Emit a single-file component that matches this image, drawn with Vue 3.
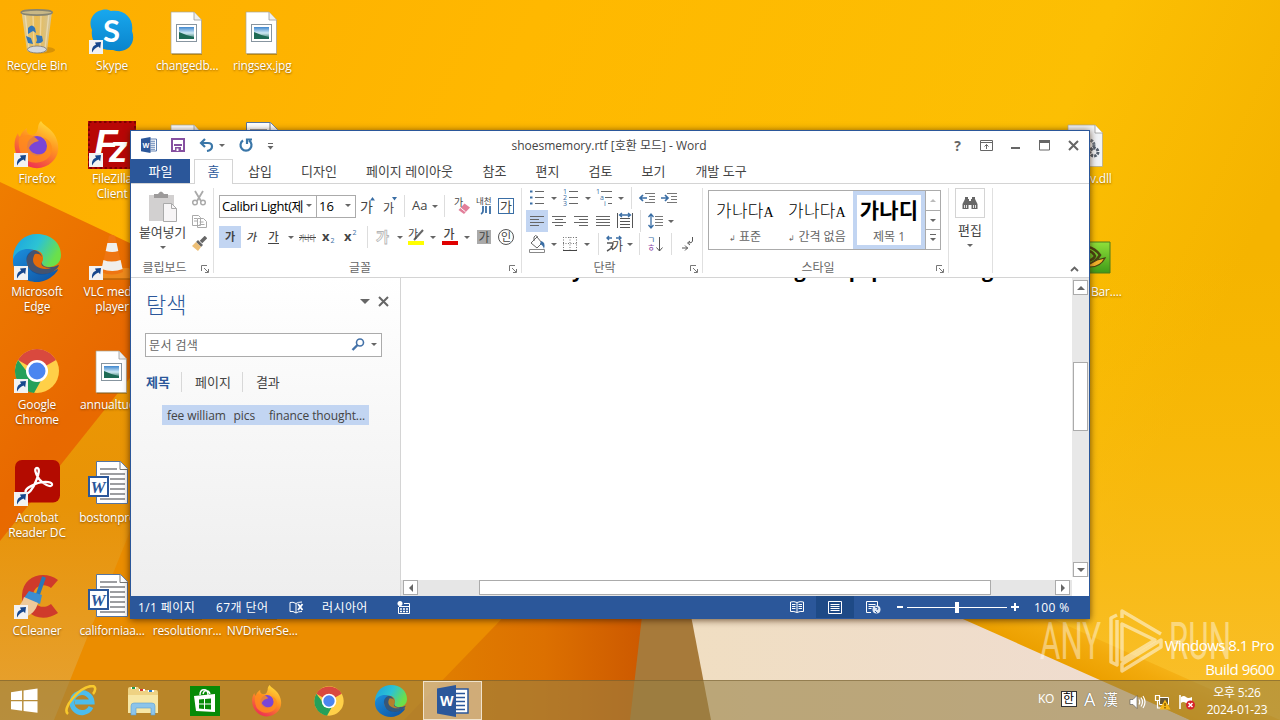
<template>
  <div class="screen">
    <!-- 图标定义 -->
    <svg class="defs" width="0" height="0">
      <defs>
        <linearGradient id="gEdge" x1="0" y1="0" x2="1" y2=".4">
          <stop offset="0" stop-color="#1ba0e0" /><stop offset=".55" stop-color="#2cc3d4" /><stop offset="1" stop-color="#6be04a" />
        </linearGradient>
        <linearGradient id="gEdge2" x1="0" y1="0" x2="1" y2="1">
          <stop offset="0" stop-color="#1b8fdd" /><stop offset="1" stop-color="#0f4f9e" />
        </linearGradient>
        <linearGradient id="gFox" x1=".8" y1="0" x2=".3" y2="1">
          <stop offset="0" stop-color="#ffe23c" /><stop offset=".45" stop-color="#ff9420" /><stop offset="1" stop-color="#ee2a56" />
        </linearGradient>
        <linearGradient id="gSkype" x1="0" y1="0" x2="0" y2="1">
          <stop offset="0" stop-color="#18a8ee" /><stop offset="1" stop-color="#0a84cc" />
        </linearGradient>
        <linearGradient id="gBin" x1="0" y1="0" x2="1" y2="0">
          <stop offset="0" stop-color="#d8cda8" /><stop offset=".5" stop-color="#e8bd5a" /><stop offset="1" stop-color="#cdc6ac" />
        </linearGradient>
        <linearGradient id="gPic" x1="0" y1="0" x2="0" y2="1">
          <stop offset="0" stop-color="#3f87cf" /><stop offset=".5" stop-color="#cfe9f4" /><stop offset="1" stop-color="#1d6a55" />
        </linearGradient>
        <linearGradient id="gNv" x1="0" y1="0" x2="0" y2="1">
          <stop offset="0" stop-color="#8fe03a" /><stop offset="1" stop-color="#3f9a18" />
        </linearGradient>
      </defs>
      <symbol id="arrowBadge" viewBox="0 0 14 14">
        <rect width="14" height="14" fill="#f2f2f2" />
        <path d="M3.200 12.400C2.400 8.600 4 5.600 7 4.800L6 2.400l6-.4-.8 6.200-1.700-1.600C6.600 7.600 4.800 9.400 3.200 12.400z" fill="#17478c" />
      </symbol>
      <symbol id="bin" viewBox="0 0 48 48">
        <ellipse cx="28" cy="42" rx="14" ry="3.500" fill="#a06a10" opacity=".4" />
        <path d="M8.500 3.500L14 43c5 3 16 3 20 0l5-39.500z" fill="url(#gBin)" opacity=".9" />
        <path d="M12 5l4 36M20 7l1 31M28 7l-1 31M36 5l-4 36" stroke="#fff" stroke-width="1.400" opacity=".35" />
        <ellipse cx="24" cy="41.500" rx="9.500" ry="3.500" fill="#d5d9dc" stroke="#777" stroke-width=".8" />
        <path d="M15 20q4-5 7 0l1 5-3-2-5 3zM23 27l6 1 1 5q-2 3-7 2l1-3zM13 28l5 2 2 6-5-1z" fill="#3276b8" />
        <ellipse cx="23.700" cy="4.500" rx="15.500" ry="2.600" fill="#c9b886" stroke="#888571" stroke-width="1.600" />
      </symbol>
      <symbol id="skype" viewBox="0 0 48 48">
        <path d="M14 2c4-1 7 0 9 1 14-2 23 8 21 20 5 13-6 24-19 19C11 43 2 34 4 22 0 14 4 4 14 2z" fill="url(#gSkype)" />
      </symbol>
      <symbol id="pic" viewBox="0 0 48 48">
        <path d="M9 5h22l8 8v34H9z" fill="#7a5b17" opacity=".5" />
        <path d="M8 4h23l7.500 8v33.500H8z" fill="#fff" stroke="#a9a696" stroke-width=".7" />
        <path d="M31 4v8h7.500" fill="#eee" stroke="#999" stroke-width=".8" />
        <rect x="13.500" y="16.500" width="20" height="17" fill="#fff" stroke="#8795a0" />
        <rect x="16" y="19" width="15" height="12" fill="url(#gPic)" />
        <path d="M16 31v-7q6 3 15 5v2z" fill="#1d6a55" />
      </symbol>
      <symbol id="dll" viewBox="0 0 48 48">
        <path d="M4 4h27l7.500 8v33.500H4z" fill="#f1f3f6" stroke="#a9a696" stroke-width=".7" />
        <path d="M31 4v8h7.500" fill="#fff" stroke="#999" stroke-width=".8" />
        <circle cx="25" cy="24" r="5" fill="none" stroke="#6c7783" stroke-width="3" stroke-dasharray="2.500 1" />
        <circle cx="30" cy="31" r="4" fill="none" stroke="#56616e" stroke-width="3" stroke-dasharray="2.500 1" />
      </symbol>
      <symbol id="nv" viewBox="0 0 48 48">
        <path d="M6 8h40v31H6z" fill="url(#gNv)" stroke="#4b7d1c" />
        <path d="M24 13c6 1 9 4 12 8-3 5-6 8-12 10M25 17c4 1 5 3 6 5-1 3-3 4-7 5" fill="none" stroke="#4a4212" stroke-width="2.500" />
        <path d="M41 24c-3 6-8 9-15 9l-2-2 9-5z" fill="#f5b32c" stroke="#4a4212" stroke-width="1.200" />
      </symbol>
      <symbol id="firefox" viewBox="0 0 48 48">
        <path d="M28 0c2 4 9 7 13 13 6 9 6 21-2 28-8 8-21 8-29 1C1 34-1 21 5 12c0 2 1 3 2 4 1-4 4-7 7-9-1 4 1 6 4 7 5 0 6-3 7-7 0-3 1-5 3-7z" fill="url(#gFox)" />
        <circle cx="24" cy="25" r="10" fill="#7a45d6" />
        <path d="M6 17c8-5 14-4 20 3-5 1-8 3-10 7 2 5 7 7 12 6 7-1 9-10 2-17 9 3 12 13 6 20-7 8-22 8-28-3-2-5-3-11-2-16z" fill="#ff8d1c" opacity=".8" />
      </symbol>
      <symbol id="filezilla" viewBox="0 0 48 48">
        <rect width="48" height="48" fill="#b80606" />
        <rect x="1" y="1" width="46" height="46" fill="none" stroke="#7b0000" stroke-width="2" stroke-dasharray="2.500 2.500" />
      </symbol>
      <symbol id="edge" viewBox="0 0 48 48">
        <path d="M0 22C2 8 12 0 24 0c14 0 24 9 24 21 0 8-6 12-12 12-5 0-8-2-7-5 3-6-1-12-8-12C12 15 3 18 0 26z" fill="url(#gEdge)" />
        <path d="M0 26c2-9 12-13 21-10-6 3-8 8-7 13 2 9 12 13 22 10 4-1 8-4 9-4 1 1-8 13-21 13C10 48-1 38 0 26z" fill="url(#gEdge2)" />
        <path d="M14 29c-2-6 1-11 7-13 5 1 9 5 8 11-1 4 3 7 9 6 4 0 7-2 8-2-3 10-28 16-32-2z" fill="#0c4894" opacity=".75" />
        <path d="M22 20c6-1 9 4 7 8-2 3 1 6 9 6-8 3-18-1-18-8 0-2 1-5 2-6z" fill="currentColor" />
      </symbol>
      <symbol id="vlc" viewBox="0 0 48 48">
        <path d="M7 34h34l5 11H2z" fill="#ee8a1c" />
        <path d="M2 45h44" stroke="#b86408" stroke-width="1.500" />
        <path d="M21 2q3-2 6 0l8 36q-11 5-22 0z" fill="#ee7512" />
        <path d="M19.400 9h9.200l1.700 8q-6 2-12.600 0zM15.400 26q8 3 17.200 0l2 9q-10 4-21 0z" fill="#f0efec" />
      </symbol>
      <symbol id="chrome" viewBox="0 0 48 48">
        <circle cx="24" cy="24" r="22" fill="#ffd048" />
        <path d="M24 24L5 13a22 22 0 0 1 38 0z" fill="#d9493e" />
        <path d="M5 13a22 22 0 0 0 16 33l9-16H18z" fill="#25a05a" />
        <circle cx="24" cy="24" r="11" fill="#fff" />
        <circle cx="24" cy="24" r="8.500" fill="#4b86f0" />
      </symbol>
      <symbol id="acrobat" viewBox="0 0 48 48">
        <rect x="2" y="0" width="45" height="42.500" rx="7" fill="#b30b00" />
        <path d="M13 33c-2-3 3-7 12-10 8-2 15-1 14 2s-9-1-13-6c-4-6-5-11-2-11s2 6-1 13c-3 8-8 14-10 12z" fill="none" stroke="#fff" stroke-width="2.300" />
      </symbol>
      <symbol id="ccleaner" viewBox="0 0 48 48">
        <path d="M45 7C32-3 10 2 9 22s20 29 36 18l-7-9c-8 6-18 2-18-8s11-14 18-8z" fill="#cf3a2b" />
        <path d="M31 4l-7 20" stroke="#2878b8" stroke-width="4" />
        <path d="M16 18l13 4-2 9-16-6z" fill="#3c8ed0" />
        <path d="M11 24l14 6c-2 8-8 13-14 14L1 36c5-2 8-6 10-12z" fill="#edc99a" />
      </symbol>
      <symbol id="wordDoc" viewBox="0 0 48 48">
        <path d="M8.500 1.500h24l7 7v35h-31z" fill="#fff" stroke="#56749f" />
        <path d="M32 1.500v8h8" fill="#fff" stroke="#777" />
        <path d="M12 9h17M12 14h25M22 19h15M22 24h15M22 29h15M22 34h15M12 39h25" stroke="#7d7f83" stroke-width="1.300" />
        <rect x="1" y="17" width="19" height="19" fill="#fff" stroke="#2b579a" stroke-width="2" />
      </symbol>
      <symbol id="word" viewBox="0 0 32 32">
        <path d="M17 4h14v24H17z" fill="#fff" stroke="#2b579a" stroke-width="1.500" />
        <path d="M19 8.500h9M19 12.500h9M19 16.500h9M19 20.500h9M19 24.500h9" stroke="#2b579a" stroke-width="1.500" />
        <path d="M0 3.500L19 0v32L0 28.500z" fill="#2b579a" />
      </symbol>
      <symbol id="ie" viewBox="0 0 32 32">
        <path d="M26 22a10 10 0 1 1 1-5H10" fill="none" stroke="#4cbdec" stroke-width="5" />
        <path d="M3 29C-4 24 14 2 27 1c5 0 3 6 1 8" fill="none" stroke="#f8c92c" stroke-width="2.600" />
      </symbol>
      <symbol id="explorer" viewBox="0 0 32 32">
        <path d="M1 4q0-2 2-2h8l2 3h16q2 0 2 2v20H1z" fill="#eed283" />
        <path d="M4 3h5M12 5h6M21 6h6" stroke="#fff" stroke-width="2" />
        <path d="M5 3h3" stroke="#219b4a" stroke-width="2" /><path d="M13 5h3" stroke="#d33a2c" stroke-width="2" /><path d="M22 6h3" stroke="#2b7bc0" stroke-width="2" />
        <path d="M1 10h30v18H1z" fill="#f7e7a6" />
        <path d="M4 30v-9q0-3 3-3h18q3 0 3 3v9h-4v-7H9v7z" fill="#8cc4ea" stroke="#5ba0d1" stroke-width=".6" />
      </symbol>
      <symbol id="store" viewBox="0 0 32 32">
        <rect x="1" y="1" width="30" height="30" fill="#078a07" />
        <path d="M11 10c0-7 8-7 8 0M14 9c1-5 6-4 7 0" fill="none" stroke="#fff" stroke-width="1.400" />
        <path d="M5 11l21-2v18L7 26z" fill="#fff" />
        <path d="M10 14.500l5-.5v4.500h-5zM16 14l6-.6v5.100h-6zM10 19.500h5V24l-5-.5zM16 19.500h6v5l-6-.4z" fill="#078a07" />
      </symbol>
      <symbol id="winLogo" viewBox="0 0 28 26">
        <path d="M0 4l11.500-1.800V12H0zM13 2L27.500 0v12H13zM0 13.300h11.500v9.900L0 21.600zM13 13.300h14.500v12L13 23.400z" fill="#fff" />
      </symbol>

      <!-- 功能区小图标 -->
      <symbol id="t-grow" viewBox="0 0 22 22"><path d="M14 5.500L16.500 2 19 5.500z" fill="#3a6ea5" /></symbol>
      <symbol id="t-shrink" viewBox="0 0 22 22"><path d="M14 2l2.500 3.500L19 2z" fill="#3a6ea5" /></symbol>
      <symbol id="t-clear" viewBox="0 0 22 22"><path d="M7.500 15l6-6.500 5.500 4-6 6.500z" fill="#e27f9a" /><path d="M9.500 12.800l5 4" stroke="#fff" /></symbol>
      <symbol id="t-ruby" viewBox="0 0 22 22"><path d="M10 11v5q0 2-2 3M13 11v7M17 11v8" fill="none" stroke="#3a6ea5" stroke-width="1.800" /></symbol>
      <symbol id="t-box" viewBox="0 0 22 22"><rect x="3.500" y="3.500" width="15" height="15" fill="none" stroke="#3a6ea5" /></symbol>
      <symbol id="t-under" viewBox="0 0 22 22"><path d="M5 17.500h11" stroke="#444" /></symbol>
      <symbol id="t-strike" viewBox="0 0 22 22"><path d="M3 11.500h17" stroke="#444" /></symbol>
      <symbol id="t-mark" viewBox="0 0 22 22"><path d="M9 14l9-10" stroke="#666" stroke-width="2" /><path d="M3 15h16v4H3z" fill="#ff0" /></symbol>
      <symbol id="t-color" viewBox="0 0 22 22"><path d="M3 15h16v4H3z" fill="#e00000" /></symbol>
      <symbol id="t-shade" viewBox="0 0 22 22"><rect x="4" y="4" width="14" height="14" fill="#aaa" /></symbol>
      <symbol id="t-circle" viewBox="0 0 22 22"><circle cx="11" cy="11" r="7.500" fill="none" stroke="#555" /></symbol>
      <symbol id="t-bullets" viewBox="0 0 22 22">
        <path d="M9 4.500h9M9 10.500h9M9 16.500h9" stroke="#666" /><path d="M4 3.500h2.500v2H4zM4 9.500h2.500v2H4zM4 15.500h2.500v2H4z" fill="#3a6ea5" />
      </symbol>
      <symbol id="t-numbers" viewBox="0 0 22 22"><path d="M9 4.500h9M9 10.500h9M9 16.500h9" stroke="#666" /></symbol>
      <symbol id="t-multi" viewBox="0 0 22 22"><path d="M8 4.500h11M12 10.500h7M15 16.500h4" stroke="#666" /></symbol>
      <symbol id="t-outdent" viewBox="0 0 22 22"><path d="M9 6.500h10M13 9.500h6M13 12.500h6M9 15.500h10" stroke="#777" /><path d="M11 11H4M7 8l-3 3 3 3" fill="none" stroke="#3a6ea5" stroke-width="1.700" /></symbol>
      <symbol id="t-indent" viewBox="0 0 22 22"><path d="M9 6.500h10M13 9.500h6M13 12.500h6M9 15.500h10" stroke="#777" /><path d="M3 11h7M7 8l3 3-3 3" fill="none" stroke="#3a6ea5" stroke-width="1.700" /></symbol>
      <symbol id="t-left" viewBox="0 0 22 22"><path d="M4 6.500h14M4 9.500h9M4 12.500h14M4 15.500h9" stroke="#666" /></symbol>
      <symbol id="t-center" viewBox="0 0 22 22"><path d="M4 6.500h14M7 9.500h8M4 12.500h14M7 15.500h8" stroke="#666" /></symbol>
      <symbol id="t-right" viewBox="0 0 22 22"><path d="M4 6.500h14M9 9.500h9M4 12.500h14M9 15.500h9" stroke="#666" /></symbol>
      <symbol id="t-justify" viewBox="0 0 22 22"><path d="M4 6.500h14M4 9.500h14M4 12.500h14M4 15.500h14" stroke="#666" /></symbol>
      <symbol id="t-dist" viewBox="0 0 22 22">
        <path d="M3.500 3v15M18.500 3v15M6 8.500h10M6 11.500h10M6 14.500h10M6 17.500h10" stroke="#555" /><path d="M5.500 5h11M8 3L5.500 5 8 7M14 3l2.500 2L14 7" fill="none" stroke="#3a6ea5" stroke-width="1.300" />
      </symbol>
      <symbol id="t-spacing" viewBox="0 0 22 22"><path d="M11 6.500h8M11 9.500h8M11 12.500h8M11 15.500h8" stroke="#777" /><path d="M7 4v14M4.500 7L7 4l2.500 3M4.500 15L7 18l2.500-3" fill="none" stroke="#3a6ea5" stroke-width="1.300" /></symbol>
      <symbol id="t-fill" viewBox="0 0 22 22"><path d="M5 10l6-6 5 6-5 5zM8 8V4q1-3 4 0" fill="#fff" stroke="#666" /><path d="M15 8q5 1 3 8-1-4-4-5z" fill="#3a6ea5" /><path d="M3.500 16.500h15v3h-15z" fill="#fff" stroke="#888" /></symbol>
      <symbol id="t-border" viewBox="0 0 22 22"><path d="M4.500 4v13M17.500 4v13M11 4v13M4 4.500h14M4 10.500h14" stroke="#777" stroke-dasharray="1 1.500" /><path d="M4 17.500h14" stroke="#444" /></symbol>
      <symbol id="t-asian" viewBox="0 0 22 22"><path d="M4 5h5M6 3L4 5l2 2M13 5h5M16 3l2 2-2 2" fill="none" stroke="#3a6ea5" stroke-width="1.400" /><path d="M4 10h6q0 5-6 8M8 13l2 4" fill="none" stroke="#555" stroke-width="1.400" /></symbol>
      <symbol id="t-sort" viewBox="0 0 22 22"><path d="M15.500 4v14M12.500 14.500l3 3.500 3-3.500" fill="none" stroke="#555" /></symbol>
      <symbol id="t-para" viewBox="0 0 22 22"><path d="M16.500 4v4q0 2-4 2M14 8l-2.500 2 2.500 2M6 15h6M9 12.500l2.500 2.500L9 17.500" fill="none" stroke="#555" /></symbol>
      <symbol id="cut" viewBox="0 0 16 16"><path d="M4 1l6 10M12 1L6 11" stroke="#aaa" stroke-width="1.800" /><circle cx="4" cy="12.500" r="2.300" fill="none" stroke="#aaa" stroke-width="1.500" /><circle cx="12" cy="12.500" r="2.300" fill="none" stroke="#aaa" stroke-width="1.500" /></symbol>
      <symbol id="copy" viewBox="0 0 16 16"><path d="M1.500 2.500h6l2 2v8h-8zM6.500 5.500h6l3 3v6h-9z" fill="#fff" stroke="#aaa" /><path d="M3 5.500h3M3 8h3M8.500 9h4M8.500 11.500h5" stroke="#aaa" /></symbol>
      <symbol id="brush" viewBox="0 0 16 16"><path d="M15 1l-5 5" stroke="#666" stroke-width="3.500" /><path d="M7 4l5 5-2 2-5-5z" fill="#666" /><path d="M5 6l5 5-3 4-6-5z" fill="#edbf76" /></symbol>
      <symbol id="paste" viewBox="0 0 30 32">
        <path d="M1 4h25v26H1z" fill="#d2d0d0" /><path d="M6 3h4q3-5 6 0h4v4H6z" fill="#9c9a9a" />
        <path d="M15.500 12.500h8l5 5v13h-13z" fill="#f7f5f6" stroke="#aaa" /><path d="M23.500 12.500v5h5" fill="none" stroke="#aaa" />
      </symbol>
    </svg>

    <!-- 桌面壁纸 -->
    <svg class="wallpaper" viewBox="0 0 1280 720" width="1280" height="720">
      <defs>
        <linearGradient id="wTop" x1="0" y1="0" x2="1" y2=".25">
          <stop offset="0" stop-color="#fdad00" /><stop offset=".4" stop-color="#ffb800" /><stop offset=".82" stop-color="#fcbf03" /><stop offset="1" stop-color="#f5b400" />
        </linearGradient>
        <linearGradient id="wRight" x1="0" y1="0" x2="0" y2="1">
          <stop offset="0" stop-color="#fabd05" stop-opacity="0" /><stop offset="1" stop-color="#f9bf2f" />
        </linearGradient>
        <linearGradient id="wLeft" x1="0" y1="0" x2="1" y2="1">
          <stop offset="0" stop-color="#ef7d00" /><stop offset=".3" stop-color="#e86900" /><stop offset="1" stop-color="#e97600" />
        </linearGradient>
        <linearGradient id="wBand" x1="0" y1="0" x2="0" y2="1">
          <stop offset="0" stop-color="#ee9a00" /><stop offset=".5" stop-color="#e89307" /><stop offset="1" stop-color="#e6a233" />
        </linearGradient>
        <linearGradient id="wRed" x1="0" y1="0" x2="1" y2="0">
          <stop offset="0" stop-color="#e28200" /><stop offset=".55" stop-color="#dc7000" /><stop offset="1" stop-color="#ca5500" />
        </linearGradient>
        <linearGradient id="wCream" x1="0" y1="0" x2="1" y2="0">
          <stop offset="0" stop-color="#f0dec2" /><stop offset="1" stop-color="#efdcd2" />
        </linearGradient>
        <linearGradient id="wRim" gradientUnits="userSpaceOnUse" x1="1055" y1="660" x2="1075" y2="615">
          <stop offset="0" stop-color="#eca000" /><stop offset=".5" stop-color="#f2aa0c" /><stop offset="1" stop-color="#f8b920" />
        </linearGradient>
      </defs>
      <rect width="1280" height="720" fill="url(#wTop)" />
      <rect x="900" y="250" width="380" height="470" fill="url(#wRight)" />
      <path d="M0 182L400 370V720H0z" fill="url(#wLeft)" />
      <path d="M0 541L200 290V720H0z" fill="url(#wBand)" />
      <path d="M54 720L170 432H600V720z" fill="#eb8d00" />
      <path d="M404 720L520 600H660V720z" fill="url(#wRed)" />
      <path d="M630 720L645 590H720V720z" fill="#a77a3a" />
      <path d="M711 720L688 600H930L1190 720z" fill="url(#wCream)" />
      <path d="M920 600L1190 720H1280L1010 600z" fill="url(#wRim)" />
    </svg>

    <!-- 桌面图标 -->
    <div
      v-for="(item, i) in desktopIcons"
      :key="i"
      class="desk-icon"
      :style="{ left: item.col * 75.1 + 'px', top: 8 + item.row * 113 + 'px' }"
    >
      <Icon :name="item.icon" :size="48" />
      <Icon v-if="item.link" class="badge" name="arrowBadge" :size="14" :box="14" />
      <span class="desk-label">{{ item.label }}</span>
    </div>
    <div class="desk-icon edge-item dll">
      <Icon name="dll" :size="48" />
      <span class="desk-label">v.dll</span>
    </div>
    <div class="desk-icon edge-item bar">
      <Icon name="nv" :size="48" />
      <span class="desk-label">Bar....</span>
    </div>

    <!-- 水印 -->
    <svg class="watermark" width="196" height="66" viewBox="0 0 196 66">
      <g fill="#fff" opacity=".42" font-family="Roboto, sans-serif" font-weight="400" font-size="52">
        <text x="2" y="52" textLength="61" lengthAdjust="spacingAndGlyphs">ANY</text>
        <text x="131" y="52" textLength="62" lengthAdjust="spacingAndGlyphs">RUN</text>
      </g>
      <g fill="none" stroke="#fff" stroke-opacity=".5" stroke-width="3.500" stroke-linejoin="round">
        <path d="M79 8l-6 3v44l6 3V13" /><path d="M84 17v36l33-20z" /><path d="M84 11V4l39 23M84 57v7l39-24v-7z" />
      </g>
    </svg>
    <div class="build">Windows 8.1 Pro<br />Build 9600</div>

    <!-- Word 窗口 -->
    <div class="window">
      <div class="titlebar">
        <div class="quick">
          <Icon name="word" :size="16" :box="32" />
          <svg width="14" height="14" viewBox="0 0 14 14" class="q-save"><path d="M1 1h12v12H1z" fill="#fff" stroke="#8650a0" stroke-width="2" /><path d="M3 7h8" stroke="#8650a0" stroke-width="2" /><path d="M4 9h6v4H4z" fill="#8650a0" /><path d="M5.500 10.500h2V13h-2z" fill="#fff" /></svg>
          <svg width="15" height="14" viewBox="0 0 15 14" class="q-undo"><path d="M6 1L2 5l4 4M2 5h7q4 0 4 3.500T8 13" fill="none" stroke="#3a76a8" stroke-width="2.200" /></svg>
          <i class="arrow q-arrow"></i>
          <svg width="14" height="14" viewBox="0 0 14 14" class="q-redo"><path d="M4 2.500A5.500 5.500 0 1 0 10 2.500M8 6V1.500h5" fill="none" stroke="#3a76a8" stroke-width="2.200" /></svg>
          <svg width="7" height="7" viewBox="0 0 7 7" class="q-more"><path d="M1 .5h5" stroke="#666" /><path d="M.5 3h6l-3 3.500z" fill="#666" /></svg>
        </div>
        <span class="caption">shoesmemory.rtf [호환 모드] - Word</span>
        <div class="win-buttons">
          <b>?</b>
          <svg width="13" height="11" viewBox="0 0 13 11"><path d="M.5.500h12v10H.5zM.5 2.500h12M6.500 9V4.500M4.500 6.500l2-2 2 2" fill="none" stroke="#666" /></svg>
          <svg width="13" height="11" viewBox="0 0 13 11"><path d="M2 7h9v2H2z" fill="#666" /></svg>
          <svg width="13" height="11" viewBox="0 0 13 11"><path d="M1.500 1v9h10V1z" fill="none" stroke="#666" /><path d="M1 0h11v3H1z" fill="#666" /></svg>
          <svg width="13" height="11" viewBox="0 0 13 11"><path d="M2 1l9 9M11 1l-9 9" stroke="#666" stroke-width="2" /></svg>
        </div>
      </div>

      <div class="tabs">
        <span class="tab file">파일</span>
        <span class="tab home">홈</span>
        <span v-for="tab in tabs" :key="tab.text" class="tab" :style="{ width: tab.width + 'px' }">{{ tab.text }}</span>
      </div>

      <div class="ribbon">
        <div class="group g-clip">
          <div class="group-body">
            <div class="paste">
              <svg width="30" height="32"><use href="#paste" /></svg>
              <span>붙여넣기</span>
              <i class="arrow"></i>
            </div>
            <div class="clip-tools">
              <Icon v-for="n in ['cut', 'copy', 'brush']" :key="n" :name="n" :size="16" :box="16" />
            </div>
          </div>
          <div class="group-name"><span>클립보드</span><svg class="launcher" width="8" height="8" viewBox="0 0 8 8"><path d="M.5 6V.500H6M3 3l4 4M7.500 4v3.500H4" fill="none" stroke="#777" /></svg></div>
        </div>

        <div class="group g-font">
          <div class="group-body rows font-rows">
            <div class="tool-row">
              <div class="combo family"><span>Calibri Light(제</span><i class="arrow"></i></div>
              <div class="combo size"><span>16</span><i class="arrow"></i></div>
              <template v-for="(t, i) in fontRow1" :key="i">
                <i v-if="t.type === 'sep'" class="sep" :style="{ width: t.w + 'px' }"></i>
                <span v-else-if="t.type === 'arrow'" class="drop" :style="{ width: t.w + 'px' }"><i class="arrow"></i></span>
                <Icon v-else class="tool" :name="'t-' + t.type" :size="22" :box="22" />
              </template>
            </div>
            <div class="tool-row">
              <template v-for="(t, i) in fontRow2" :key="i">
                <i v-if="t.type === 'sep'" class="sep" :style="{ width: t.w + 'px' }"></i>
                <span v-else-if="t.type === 'arrow'" class="drop" :style="{ width: t.w + 'px' }"><i class="arrow"></i></span>
                <Icon v-else class="tool" :class="{ on: t.on }" :name="'t-' + t.type" :size="22" :box="22" />
              </template>
            </div>
          </div>
          <div class="group-name"><span>글꼴</span><svg class="launcher" width="8" height="8" viewBox="0 0 8 8"><path d="M.5 6V.500H6M3 3l4 4M7.500 4v3.500H4" fill="none" stroke="#777" /></svg></div>
        </div>

        <div class="group g-para">
          <div class="group-body rows para-rows">
            <div v-for="(row, r) in paraRows" :key="r" class="tool-row">
              <template v-for="(t, i) in row" :key="i">
                <i v-if="t.type === 'sep'" class="sep" :style="{ width: t.w + 'px' }"></i>
                <span v-else-if="t.type === 'arrow'" class="drop" :style="{ width: t.w + 'px' }"><i class="arrow"></i></span>
                <Icon v-else class="tool" :class="{ on: t.on }" :name="'t-' + t.type" :size="22" :box="22" />
              </template>
            </div>
          </div>
          <div class="group-name"><span>단락</span><svg class="launcher" width="8" height="8" viewBox="0 0 8 8"><path d="M.5 6V.500H6M3 3l4 4M7.500 4v3.500H4" fill="none" stroke="#777" /></svg></div>
        </div>

        <div class="group g-style">
          <div class="group-body">
            <div class="gallery">
              <div class="style-item"><span class="sample">가나다<small>A</small></span><span class="style-name"><em>↲</em> 표준</span></div>
              <div class="style-item"><span class="sample">가나다<small>A</small></span><span class="style-name"><em>↲</em> 간격 없음</span></div>
              <div class="style-item selected"><span class="sample">가나디</span><span class="style-name">제목 1</span></div>
              <div class="gallery-nav">
                <span><i class="arrow up dim"></i></span>
                <span><i class="arrow"></i></span>
                <span class="more"><i class="arrow"></i></span>
              </div>
            </div>
          </div>
          <div class="group-name"><span>스타일</span><svg class="launcher" width="8" height="8" viewBox="0 0 8 8"><path d="M.5 6V.500H6M3 3l4 4M7.500 4v3.500H4" fill="none" stroke="#777" /></svg></div>
        </div>

        <div class="group g-edit">
          <div class="edit-icon">
            <svg width="16" height="14" viewBox="0 0 16 14"><path d="M3 1h3v2h1v2h2V3h1V1h3v2l2.500 5v5H9.500V9h-3v4H.500V8L3 3z" fill="#666" /><path d="M2.500 9v3M4.500 9v3M11.500 9v3M13.500 9v3" stroke="#fff" stroke-width=".8" /></svg>
          </div>
          <span>편집</span>
          <i class="arrow"></i>
        </div>
        <svg class="collapse" width="9" height="6" viewBox="0 0 9 6"><path d="M1 5l3.500-3.500L8 5" fill="none" stroke="#666" stroke-width="1.800" /></svg>
      </div>

      <div class="content">
        <div class="nav">
          <div class="nav-head">
            <span class="nav-title">탐색</span>
            <i class="arrow big"></i>
            <svg width="11" height="11" viewBox="0 0 11 11"><path d="M1 1l9 9M10 1l-9 9" stroke="#666" stroke-width="2" /></svg>
          </div>
          <div class="search">
            <span>문서 검색</span>
            <svg width="14" height="13" viewBox="0 0 14 13"><circle cx="9" cy="4.500" r="3.500" fill="none" stroke="#4472a8" stroke-width="1.600" /><path d="M6.500 7L1.500 12" stroke="#4472a8" stroke-width="2.400" /></svg>
            <i class="arrow"></i>
          </div>
          <div class="nav-tabs"><b>제목</b><span>페이지</span><span>결과</span></div>
          <div class="heading"><span>fee william</span><span>pics</span><span>finance thought...</span></div>
        </div>
        <div class="doc">
          <div class="page">
            <div class="doc-line"><span class="l1">y</span><span class="l2">g</span><span class="l3">p</span><span class="l4">p</span><span class="l5">g</span></div>
          </div>
          <div class="hscroll">
            <span class="sbtn"><i class="arrow left"></i></span>
            <span class="hthumb"></span>
            <span class="sbtn"><i class="arrow right"></i></span>
          </div>
        </div>
        <div class="vscroll">
          <span class="sbtn"><i class="arrow up"></i></span>
          <span class="vthumb"></span>
          <span class="sbtn"><i class="arrow"></i></span>
        </div>
      </div>

      <div class="status">
        <span class="s-page">1/1 페이지</span>
        <span class="s-words">67개 단어</span>
        <svg class="s-proof" width="15" height="13" viewBox="0 0 15 13"><path d="M7 2.500Q4 .5 1 1.500v9q3-.8 6 1.500V2.500q2-1.500 6-1.500M7 12q2-1.500 6-1.500" fill="none" stroke="#fff" /><path d="M9 3l4.500 6M13.500 3L9 9" stroke="#fff" stroke-width="1.800" /></svg>
        <span class="s-lang">러시아어</span>
        <svg class="s-macro" width="14" height="13" viewBox="0 0 14 13"><circle cx="3" cy="2.500" r="2.500" fill="#fff" /><path d="M1.500 6v6.500h11v-10H7M2 5.500h10" fill="none" stroke="#fff" /><path d="M3 8h8M3 10.500h8" stroke="#fff" stroke-dasharray="2 1" stroke-width="1.300" /></svg>
        <i class="grow"></i>
        <span class="view"><svg width="14" height="12" viewBox="0 0 14 12"><path d="M7 1.500Q4 0 .5 1v9.500Q4 10 7 11.500q3-1.500 6.500-1V1Q10 0 7 1.500v10M2 3.500h3.500M2 5.500h3.500M2 7.500h3.500M8.500 3.500H12M8.500 5.500H12M8.500 7.500H12" fill="none" stroke="#fff" /></svg></span>
        <span class="view current"><svg width="14" height="13" viewBox="0 0 14 13"><path d="M.5.500h13v12H.500zM2.500 3.500h9M2.500 5.500h9M2.500 7.500h9M2.500 9.500h9" fill="none" stroke="#fff" /></svg></span>
        <span class="view"><svg width="15" height="13" viewBox="0 0 15 13"><path d="M5 11.500H.500V.500h11V5M2.500 3.500h7M2.500 5.500h6M2.500 7.500h3" fill="none" stroke="#fff" /><circle cx="10.500" cy="8.500" r="4" fill="#dfe7f3" /><path d="M9 6l3 1-1 2M9 10l2 2" stroke="#2b579a" fill="none" /></svg></span>
        <i class="minus"></i>
        <div class="slider"><i class="knob"></i></div>
        <i class="plus"></i>
        <span class="s-zoom">100 %</span>
      </div>
    </div>

    <!-- 任务栏 -->
    <div class="taskbar">
      <span class="start"><svg width="27" height="26"><use href="#winLogo" /></svg></span>
      <span v-for="app in taskApps" :key="app.icon" class="task" :class="{ active: app.active }">
        <Icon :name="app.icon" :size="32" :box="app.box" />
      </span>
      <i class="grow"></i>
      <div class="tray">
        <span class="ko">KO</span>
        <span class="han">한</span>
        <span class="ime">A</span>
        <span class="hanja">漢</span>
        <svg class="vol" width="17" height="16" viewBox="0 0 17 16"><path d="M1 5.500h3l4-4v13l-4-4H1z" fill="#fff" stroke="#555" stroke-width=".6" /><path d="M10 5.500q1.500 2.500 0 5M12 3.500q3 4.500 0 9M14 2q4 6 0 12" fill="none" stroke="#fff" stroke-width="1.200" /></svg>
        <svg class="net" width="17" height="16" viewBox="0 0 17 16"><path d="M5.500 3.500h9v7h-9z" fill="#665736" stroke="#fff" /><path d="M1.500 1.500h4v5h-4zM3.500 7v7h4" fill="none" stroke="#fff" stroke-width="1.200" /><path d="M11 5.500L16.500 15.500h-11z" fill="#f8b819" /><path d="M11 9v3M11 13v1.500" stroke="#443000" /></svg>
        <svg class="flag" width="18" height="16" viewBox="0 0 18 16"><path d="M2 1v14" stroke="#fff" stroke-width="1.600" /><path d="M3 3q3-2 5 0t6 0v6q-3 2-6 0T3 9z" fill="#fff" /><circle cx="12.500" cy="11" r="4.500" fill="#d8232a" /><path d="M10.500 9l4 4M14.500 9l-4 4" stroke="#fff" stroke-width="1.500" /></svg>
        <div class="clock"><span>오후 5:26</span><span>2024-01-23</span></div>
      </div>
    </div>
  </div>
</template>

<script setup>
import { h } from 'vue';

// --- 图标中的文字 ---
const blue = '#3a6ea5';
const iconText = {
  skype: [{ t: 'S', x: 15, y: 34, 'font-size': 31, 'font-weight': 700, fill: '#fff', 'font-family': 'Lato, sans-serif' }],
  filezilla: [
    { t: 'F', x: 6, y: 36, 'font-size': 39, 'font-weight': 700, 'font-style': 'italic', fill: '#fff', 'font-family': 'Liberation Sans' },
    { t: 'z', x: 21, y: 41, 'font-size': 37, 'font-weight': 700, 'font-style': 'italic', fill: '#fff', 'font-family': 'Liberation Sans' },
  ],
  wordDoc: [{ t: 'W', x: 2.5, y: 32.5, 'font-size': 17, 'font-weight': 700, 'font-style': 'italic', fill: '#2b579a', 'font-family': 'Liberation Serif' }],
  word: [{ t: 'W', x: 3, y: 21, 'font-size': 14, 'font-weight': 700, fill: '#fff' }],
  't-grow': [{ t: '가', x: 4, y: 17, 'font-size': 14 }],
  't-shrink': [{ t: '가', x: 5, y: 18, 'font-size': 12 }],
  't-aa': [{ t: 'Aa', x: 3, y: 15, 'font-size': 13 }],
  't-clear': [{ t: '가', x: 3, y: 11, 'font-size': 10 }],
  't-ruby': [{ t: '내천', x: 3, y: 9, 'font-size': 8.5 }],
  't-box': [{ t: '가', x: 5, y: 16, 'font-size': 13 }],
  't-bold': [{ t: '가', x: 6, y: 15, 'font-size': 11, 'font-weight': 700 }],
  't-italic': [{ t: '가', x: 8, y: 15, 'font-size': 11, 'font-weight': 500, transform: 'skewX(-10)' }],
  't-under': [{ t: '가', x: 5.5, y: 15, 'font-size': 11, 'font-weight': 500 }],
  't-strike': [{ t: '가나다', x: 3, y: 15, 'font-size': 8, textLength: 16, lengthAdjust: 'spacingAndGlyphs' }],
  't-sub': [{ t: 'x', x: 4, y: 15, 'font-size': 13, 'font-weight': 700 }, { t: '2', x: 12.5, y: 17, 'font-size': 7, fill: blue }],
  't-sup': [{ t: 'x', x: 4, y: 15, 'font-size': 13, 'font-weight': 700 }, { t: '2', x: 12.5, y: 9, 'font-size': 7, fill: blue }],
  't-effect': [{ t: '가', x: 4, y: 16, 'font-size': 14, 'font-weight': 700, fill: '#fff', stroke: '#b5b5b5', 'stroke-width': 0.8 }],
  't-mark': [{ t: '가', x: 3, y: 12, 'font-size': 11 }],
  't-color': [{ t: '가', x: 4.5, y: 13, 'font-size': 12, 'font-weight': 500 }],
  't-shade': [{ t: '가', x: 5.5, y: 15.5, 'font-size': 12 }],
  't-circle': [{ t: '인', x: 6, y: 15, 'font-size': 11 }],
  't-numbers': [
    { t: '1', x: 3, y: 7, 'font-size': 7, fill: blue },
    { t: '2', x: 3, y: 13, 'font-size': 7, fill: blue },
    { t: '3', x: 3, y: 19, 'font-size': 7, fill: blue },
  ],
  't-multi': [
    { t: '1', x: 3, y: 7, 'font-size': 7, fill: blue },
    { t: 'a', x: 7, y: 13, 'font-size': 7, fill: blue },
    { t: 'i', x: 11, y: 19, 'font-size': 7, fill: blue },
  ],
  't-asian': [{ t: '가', x: 9, y: 18, 'font-size': 12 }],
  't-sort': [{ t: 'ㄱ', x: 3, y: 10, 'font-size': 9, fill: blue }, { t: 'ㅎ', x: 3, y: 18, 'font-size': 9, fill: '#8c4ba8' }],
};

/**
 * @function Icon
 * @description 图形来自 symbol，文字单独叠加。
 */
const Icon = ({ name, size, box = 48 }) =>
  h('svg', { width: size, height: size, viewBox: `0 0 ${box} ${box}` }, [
    h('use', { href: '#' + name, width: box, height: box }),
    ...(iconText[name] || []).map(({ t, ...attrs }) => h('text', { fill: '#444', ...attrs }, t)),
  ]);

// --- 桌面图标 ---
const desktopIcons = [
  { col: 0, row: 0, icon: 'bin', label: 'Recycle Bin' },
  { col: 1, row: 0, icon: 'skype', label: 'Skype', link: true },
  { col: 2, row: 0, icon: 'pic', label: 'changedb...' },
  { col: 3, row: 0, icon: 'pic', label: 'ringsex.jpg' },
  { col: 0, row: 1, icon: 'firefox', label: 'Firefox', link: true },
  { col: 1, row: 1, icon: 'filezilla', label: 'FileZilla Client', link: true },
  { col: 2, row: 1, icon: 'pic', label: '' },
  { col: 3, row: 1, icon: 'wordDoc', label: '' },
  { col: 0, row: 2, icon: 'edge', label: 'Microsoft Edge', link: true },
  { col: 1, row: 2, icon: 'vlc', label: 'VLC media player', link: true },
  { col: 0, row: 3, icon: 'chrome', label: 'Google Chrome', link: true },
  { col: 1, row: 3, icon: 'pic', label: 'annualtue...' },
  { col: 0, row: 4, icon: 'acrobat', label: 'Acrobat Reader DC', link: true },
  { col: 1, row: 4, icon: 'wordDoc', label: 'bostonpro...' },
  { col: 0, row: 5, icon: 'ccleaner', label: 'CCleaner', link: true },
  { col: 1, row: 5, icon: 'wordDoc', label: 'californiaa...' },
  { col: 2, row: 5, icon: 'pic', label: 'resolutionr...' },
  { col: 3, row: 5, icon: 'pic', label: 'NVDriverSe...' },
];

// --- 任务栏 ---
const taskApps = [
  { icon: 'ie', box: 32 },
  { icon: 'explorer', box: 32 },
  { icon: 'store', box: 32 },
  { icon: 'firefox', box: 48 },
  { icon: 'chrome', box: 48 },
  { icon: 'edge', box: 48 },
  { icon: 'word', box: 32, active: true },
];

// --- 功能区选项卡 ---
const tabs = [
  { text: '삽입', width: 54 },
  { text: '디자인', width: 64 },
  { text: '페이지 레이아웃', width: 117 },
  { text: '참조', width: 53 },
  { text: '편지', width: 53 },
  { text: '검토', width: 53 },
  { text: '보기', width: 53 },
  { text: '개발 도구', width: 82 },
];

const tool = (type, on = false) => ({ type, on });
const arrow = (w = 11) => ({ type: 'arrow', w });
const sep = (w = 6) => ({ type: 'sep', w });

// --- 字体组 ---
const fontRow1 = [tool('grow'), tool('shrink'), sep(9), tool('aa'), arrow(7), sep(13), tool('clear'), tool('ruby'), tool('box')];
const fontRow2 = [
  tool('bold', true), tool('italic'), tool('under'), arrow(11), tool('strike'), tool('sub'), tool('sup'), sep(10),
  tool('effect'), arrow(11), tool('mark'), arrow(12), tool('color'), arrow(12), tool('shade'), tool('circle'),
];

// --- 段落组 ---
const paraRows = [
  [tool('bullets'), arrow(12), tool('numbers'), arrow(11), tool('multi'), arrow(11), sep(10), tool('outdent'), tool('indent')],
  [tool('left', true), tool('center'), tool('right'), tool('justify'), tool('dist'), sep(8), tool('spacing'), arrow(9)],
  [tool('fill'), arrow(11), tool('border'), arrow(12), sep(10), tool('asian'), arrow(9), sep(10), tool('sort'), sep(10), tool('para')],
];
</script>

<style>
body {
  overflow: hidden;
}
</style>

<style scoped>
.screen {
  position: relative;
  width: 1280px;
  height: 720px;
  overflow: hidden;
  font-family: "Open Sans", "Noto Sans CJK KR", sans-serif;
  font-size: 12px;
  color: #444;
}

.screen * {
  box-sizing: border-box;
}

svg {
  display: block;
  flex-shrink: 0;
}

.defs {
  position: absolute;
}

.wallpaper {
  position: absolute;
  inset: 0;
}

/* 桌面 */
.desk-icon {
  position: absolute;
  width: 74px;
  display: flex;
  flex-direction: column;
  align-items: center;
}

.desk-icon svg {
  color: #e66b08;
}

.badge {
  position: absolute;
  left: 14px;
  top: 32px;
}

.desk-label {
  width: 71px;
  margin-top: 2px;
  text-align: center;
  line-height: 15px;
  letter-spacing: -0.18px;
  color: #fff;
  text-shadow: 0 1px 2px rgba(80, 40, 0, 0.6);
}

.edge-item {
  left: 1064px;
  width: 60px;
  align-items: flex-start;
}

.edge-item .desk-label {
  width: auto;
}

.dll {
  top: 121px;
}

.dll .desk-label {
  margin-left: 26px;
}

.bar {
  top: 234px;
}

.bar .desk-label {
  margin-left: 27px;
}

.watermark {
  position: absolute;
  left: 1038px;
  top: 607px;
}

.build {
  position: absolute;
  right: 6px;
  top: 633px;
  text-align: right;
  font-size: 15px;
  line-height: 24px;
  letter-spacing: -0.5px;
  color: #fff;
}

/* 窗口 */
.window {
  position: absolute;
  left: 130px;
  top: 130px;
  width: 960px;
  height: 489px;
  display: flex;
  flex-direction: column;
  background: #fff;
  border: 1px solid #2b579a;
  box-shadow: 0 1px 7px rgba(60, 30, 0, 0.75);
}

.titlebar {
  position: relative;
  height: 28px;
  display: flex;
  justify-content: space-between;
  align-items: center;
}

.quick,
.win-buttons {
  display: flex;
  align-items: center;
}

.quick {
  padding-left: 10px;
}

.q-save {
  margin-left: 14px;
}

.q-undo {
  margin-left: 14px;
}

.q-arrow {
  margin-left: 5px;
}

.q-redo {
  margin-left: 14px;
}

.q-more {
  margin-left: 14px;
  margin-top: 3px;
}

.caption {
  position: absolute;
  left: 0;
  right: 2px;
  text-align: center;
}

.win-buttons {
  gap: 16px;
  padding-right: 9px;
  color: #666;
  font-size: 14px;
}

.win-buttons b {
  width: 13px;
  text-align: center;
}

.arrow {
  display: block;
  flex-shrink: 0;
  width: 0;
  height: 0;
  border: 3px solid transparent;
  border-top-color: #666;
  border-bottom-width: 0;
}

.arrow.up {
  border-width: 0 4px 4px;
  border-bottom-color: #666;
}

.arrow.dim {
  border-width: 0 3px 3px;
  border-bottom-color: #bbb;
}

.arrow.left {
  border-width: 4px 4px 4px 0;
  border-color: transparent #666;
}

.arrow.right {
  border-width: 4px 0 4px 4px;
  border-color: transparent #666;
}

.arrow.big {
  border-width: 5px 5px 0;
}

.tabs {
  height: 25px;
  display: flex;
  border-bottom: 1px solid #d4d4d4;
  font-size: 13px;
}

.tab {
  line-height: 24px;
  text-align: center;
  white-space: nowrap;
}

.tab.file {
  width: 59px;
  height: 24px;
  background: #2b579a;
  color: #fff;
}

.tab.home {
  width: 39px;
  height: 25px;
  margin-left: 4px;
  border: 1px solid #d4d4d4;
  border-bottom: 0;
  background: #fff;
  line-height: 22px;
  color: #2b579a;
}

.ribbon {
  position: relative;
  height: 94px;
  display: flex;
  border-bottom: 1px solid #d4d4d4;
}

.group {
  position: relative;
  margin: 4px 0;
  display: flex;
  flex-direction: column;
  border-right: 1px solid #e0e0e0;
}

.group-body {
  flex: 1;
  display: flex;
}

.group-body.rows {
  flex-direction: column;
}

.group-name {
  position: relative;
  height: 11px;
  line-height: 11px;
  padding-right: 15px;
  text-align: center;
  color: #666;
}

.launcher {
  position: absolute;
  right: 4px;
  bottom: 0;
}

.g-clip {
  width: 83px;
}

.paste {
  width: 60px;
  padding: 3px 0 0 3px;
  display: flex;
  flex-direction: column;
  align-items: center;
  white-space: nowrap;
  font-size: 13px;
  line-height: 18px;
  letter-spacing: -0.2px;
}

.paste .arrow {
  margin-top: 5px;
}

.clip-tools {
  padding-top: 2px;
  display: flex;
  flex-direction: column;
  gap: 7px;
}

.g-font {
  width: 308px;
}

.font-rows {
  padding: 7px 0 0 5px;
  gap: 9px;
}

.para-rows {
  margin-top: -1px;
  padding-left: 4px;
  gap: 1px;
}

.g-para {
  width: 181px;
}

.tool-row {
  height: 22px;
  display: flex;
  align-items: center;
}

.tool.on {
  background: #c2d5f2;
}

.drop {
  display: flex;
  justify-content: center;
}

.sep {
  height: 22px;
  background: linear-gradient(#ddd, #ddd) center / 1px 100% no-repeat;
}

.combo {
  height: 23px;
  display: flex;
  align-items: center;
  justify-content: space-between;
  border: 1px solid #ababab;
  padding: 0 4px 1px 2px;
  color: #000;
  font-size: 13px;
  white-space: nowrap;
}

.family {
  width: 98px;
  letter-spacing: -0.42px;
}

.size {
  width: 40px;
  margin-left: -1px;
}

.g-style {
  width: 246px;
}

.gallery {
  width: 233px;
  height: 60px;
  margin: 2px 0 0 5px;
  display: flex;
  border: 1px solid #ababab;
}

.style-item {
  width: 72px;
  display: flex;
  flex-direction: column;
  align-items: center;
  white-space: nowrap;
}

.sample {
  height: 32px;
  line-height: 39px;
  font-size: 17px;
  font-weight: 300;
  letter-spacing: 0.2px;
  color: #000;
}

.sample small {
  font: 14px "Liberation Serif", serif;
}

.style-name {
  line-height: 27px;
  color: #666;
}

.style-name em {
  font-size: 8px;
  font-style: normal;
}

.style-item.selected {
  border: 4px solid #c2d5f2;
}

.selected .sample {
  height: 28px;
  line-height: 30px;
  font-size: 21px;
  font-weight: 700;
}

.gallery-nav {
  flex: 1;
  display: flex;
  flex-direction: column;
  border-left: 1px solid #ababab;
}

.gallery-nav span {
  flex: 1;
  display: flex;
  align-items: center;
  justify-content: center;
}

.gallery-nav span + span {
  border-top: 1px solid #ababab;
}

.gallery-nav .more .arrow {
  position: relative;
}

.gallery-nav .more .arrow::before {
  content: "";
  position: absolute;
  left: -3px;
  top: -7px;
  width: 6px;
  height: 1px;
  background: #666;
}

.g-edit {
  width: 44px;
  padding-right: 1px;
  align-items: center;
  font-size: 13px;
}

.edit-icon {
  width: 30px;
  height: 30px;
  margin-bottom: 2px;
  display: flex;
  align-items: center;
  justify-content: center;
  border: 1px solid #d4d4d4;
}

.g-edit .arrow {
  margin-top: 5px;
}

.collapse {
  position: absolute;
  right: 10px;
  bottom: 5px;
}

/* 内容区 */
.content {
  height: 318px;
  display: flex;
}

.nav {
  width: 270px;
  padding: 0 18px 0 14px;
  border-right: 1px solid #d4d4d4;
  background: linear-gradient(#fff, #eee);
}

.nav-head {
  height: 55px;
  display: flex;
  align-items: center;
  padding: 0 0 8px 1px;
}

.nav-title {
  flex: 1;
  font-size: 22px;
  font-weight: 300;
  line-height: 30px;
  padding-top: 5px;
  color: #2b579a;
}

.nav-head svg {
  margin: 0 -7px 0 8px;
}

.search {
  height: 24px;
  display: flex;
  align-items: center;
  border: 1px solid #ababab;
  background: #fff;
  padding: 0 4px 1px 3px;
  color: #666;
  letter-spacing: 0.4px;
}

.search span {
  flex: 1;
}

.search .arrow {
  margin-left: 6px;
}

.nav-tabs {
  height: 20px;
  margin-top: 15px;
  display: flex;
  line-height: 20px;
  font-size: 13px;
}

.nav-tabs b {
  width: 36px;
  padding-left: 1px;
  color: #2b579a;
}

.nav-tabs span {
  padding: 0 12px 0 13px;
  border-left: 1px solid #d8d8d8;
}

.nav-tabs span + span {
  margin-left: -1px;
}

.heading {
  width: 207px;
  height: 20px;
  margin: 13px 0 0 17px;
  padding: 0 4px 0 5px;
  display: flex;
  justify-content: space-between;
  background: #c2d5f2;
  line-height: 21px;
  letter-spacing: -0.1px;
  white-space: nowrap;
}

.heading span:nth-child(2) {
  margin-right: 6px;
}

.doc {
  width: 671px;
  display: flex;
  flex-direction: column;
}

.page {
  height: 302px;
  overflow: hidden;
  background: #fff;
}

.doc-line {
  height: 24px;
  margin-top: -20px;
  display: flex;
  font-size: 20px;
  font-weight: 700;
  line-height: 24px;
  color: #000;
}

.l1 {
  margin-left: 171px;
}

.l2 {
  margin-left: 211px;
}

.l3 {
  margin-left: 43px;
}

.l4 {
  margin-left: 10px;
}

.l5 {
  margin-left: 98px;
}

.sbtn {
  width: 15px;
  height: 15px;
  display: flex;
  align-items: center;
  justify-content: center;
  border: 1px solid #ababab;
  background: #fff;
}

.hscroll {
  height: 16px;
  padding: 0 2px;
  display: flex;
  justify-content: space-between;
  background: #e6e6e6;
}

.hthumb {
  width: 512px;
  height: 15px;
  margin-left: -3px;
  border: 1px solid #ababab;
  background: #fff;
}

.vscroll {
  width: 17px;
  height: 299px;
  padding: 2px 1px 0;
  display: flex;
  flex-direction: column;
  background: #e8e8e8;
}

.vscroll .sbtn:last-child {
  margin-top: auto;
}

.vscroll .arrow:not(.up) {
  border-width: 4px 4px 0;
}

.vthumb {
  height: 69px;
  margin-top: 67px;
  border: 1px solid #ababab;
  background: #fff;
}

/* 状态栏 */
.status {
  flex: 1;
  display: flex;
  align-items: center;
  background: #2b579a;
  color: #fff;
  white-space: nowrap;
  letter-spacing: 0.4px;
}

.grow {
  flex: 1;
}

.s-page {
  width: 78px;
  padding-left: 7px;
}

.s-words {
  margin-left: 7px;
  width: 73px;
}

.s-lang {
  margin-left: 18px;
  width: 75px;
}

.view {
  width: 38px;
  height: 22px;
  display: flex;
  align-items: center;
  justify-content: center;
}

.view.current {
  background: #1e4a86;
}

.minus {
  width: 6px;
  height: 2px;
  margin-left: 5px;
  background: #fff;
}

.slider {
  width: 100px;
  height: 11px;
  margin: 0 4px;
  display: flex;
  justify-content: center;
  background: linear-gradient(#fff, #fff) center / 100% 1px no-repeat;
}

.knob {
  width: 4px;
  height: 11px;
  background: #fff;
}

.plus {
  width: 8px;
  height: 8px;
  background: linear-gradient(#fff, #fff) center / 100% 2px no-repeat, linear-gradient(#fff, #fff) center / 2px 100% no-repeat;
}

.s-zoom {
  width: 35px;
  margin: 0 20px 0 15px;
}

/* 任务栏 */
.taskbar {
  position: absolute;
  left: 0;
  right: 0;
  bottom: 0;
  height: 40px;
  display: flex;
  align-items: center;
  border-top: 1px solid rgba(110, 85, 40, 0.5);
  background: rgba(149, 127, 68, 0.59);
}

.start {
  width: 50px;
  padding-left: 11px;
}

.task {
  width: 62px;
  height: 39px;
  display: flex;
  align-items: center;
  justify-content: center;
  color: #b4802d;
}

.task.active {
  width: 59px;
  height: 39px;
  margin-left: 1px;
  border: 1px solid #f0e3cc;
  background: rgba(235, 220, 200, 0.5);
}

.tray {
  display: flex;
  align-items: center;
  color: #fff;
}

.ko {
  width: 16px;
  margin-bottom: 5px;
  letter-spacing: -0.3px;
}

.han {
  width: 14px;
  height: 14px;
  margin: 0 0 4px 8px;
  border: 1px solid #fff;
  outline: 1px solid #333;
  background: #fff;
  color: #000;
  font-size: 12px;
  line-height: 11px;
}

.ime {
  width: 14px;
  margin: 0 0 3px 8px;
  font-size: 18px;
  line-height: 20px;
  text-shadow: 0 0 1px #333;
}

.hanja {
  margin: 0 0 3px 5px;
  font-size: 15px;
  line-height: 20px;
  text-shadow: 0 0 1px #333;
}

.vol {
  margin: 3px 0 0 11px;
}

.net {
  margin: 3px 0 0 8px;
}

.flag {
  margin: 3px -2px 0 7px;
}

.clock {
  width: 86px;
  display: flex;
  flex-direction: column;
  align-items: center;
  line-height: 17px;
  letter-spacing: -0.2px;
  padding-top: 1px;
}
</style>
